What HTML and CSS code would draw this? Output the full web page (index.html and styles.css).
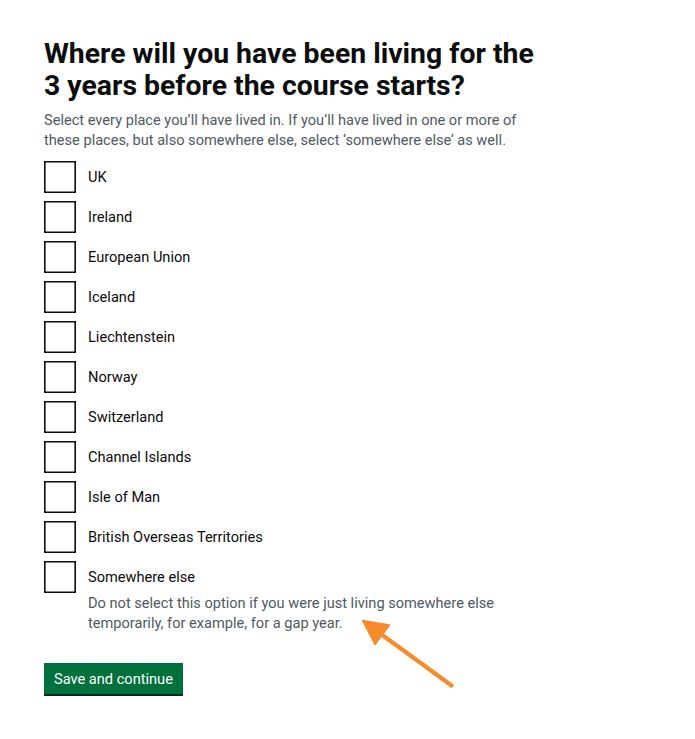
FILE: index.html
```html
<!DOCTYPE html>
<html lang="en">
<head>
<meta charset="utf-8">
<title>Where will you have been living</title>
<link rel="stylesheet" href="styles.css">
</head>
<body>
<main class="page">
  <form class="form">
    <fieldset class="fieldset">
      <legend class="legend">
        <h1 class="heading">Where will you have been living for the 3 years before the course starts?</h1>
      </legend>
      <p class="hint">Select every place you’ll have lived in. If you’ll have lived in one or more of these places, but also somewhere else, select ‘somewhere else’ as well.</p>
      <div class="checkboxes">
        <div class="item"><input class="box" type="checkbox" id="c1"><label class="label" for="c1">UK</label></div>
        <div class="item"><input class="box" type="checkbox" id="c2"><label class="label" for="c2">Ireland</label></div>
        <div class="item"><input class="box" type="checkbox" id="c3"><label class="label" for="c3">European Union</label></div>
        <div class="item"><input class="box" type="checkbox" id="c4"><label class="label" for="c4">Iceland</label></div>
        <div class="item"><input class="box" type="checkbox" id="c5"><label class="label" for="c5">Liechtenstein</label></div>
        <div class="item"><input class="box" type="checkbox" id="c6"><label class="label" for="c6">Norway</label></div>
        <div class="item"><input class="box" type="checkbox" id="c7"><label class="label" for="c7">Switzerland</label></div>
        <div class="item"><input class="box" type="checkbox" id="c8"><label class="label" for="c8">Channel Islands</label></div>
        <div class="item"><input class="box" type="checkbox" id="c9"><label class="label" for="c9">Isle of Man</label></div>
        <div class="item"><input class="box" type="checkbox" id="c10"><label class="label" for="c10">British Overseas Territories</label></div>
        <div class="item"><input class="box" type="checkbox" id="c11"><label class="label" for="c11">Somewhere else</label>
          <div class="item-hint">Do not select this option if you were just living somewhere else temporarily, for example, for a gap year.</div>
        </div>
      </div>
    </fieldset>
    <button class="button" type="button">Save and continue</button>
  </form>
  <svg class="arrow" width="695" height="739" viewBox="0 0 695 739" aria-hidden="true">
    <line x1="451.5" y1="685.5" x2="374" y2="629" stroke="#f68b2c" stroke-width="4.2" stroke-linecap="round"/>
    <polygon points="362.5,620.5 389.5,625 375,644.5" fill="#f68b2c" stroke="#f68b2c" stroke-width="1.5" stroke-linejoin="round"/>
  </svg>
</main>
</body>
</html>
```
FILE: styles.css
```css
html, body {
  margin: 0;
  padding: 0;
  background: #ffffff;
}

body {
  font-family: Roboto, "Liberation Sans", Arial, sans-serif;
  color: #0b0c0c;
}

.page {
  position: relative;
  width: 695px;
  min-height: 739px;
  padding: 38px 0 0 44px;
  box-sizing: border-box;
}

.form {
  width: 505px;
}

.fieldset {
  margin: 0;
  padding: 0;
  border: 0;
  min-width: 0;
}

.legend {
  padding: 0;
  display: block;
  width: 100%;
}

.heading {
  margin: 0 0 8px;
  font-size: 28.4px;
  line-height: 32px;
  font-weight: 700;
  color: #0b0c0c;
}

.hint {
  margin: 0 0 11px;
  font-size: 14.6px;
  line-height: 20px;
  color: #505a5f;
}

.checkboxes {
  display: flex;
  flex-direction: column;
  gap: 8px;
}

.item {
  display: grid;
  grid-template-columns: 32px 1fr;
  align-items: start;
}

.box {
  appearance: none;
  -webkit-appearance: none;
  margin: 0;
  width: 32px;
  height: 32px;
  box-sizing: border-box;
  border: 1px solid #0b0c0c;
  box-shadow: inset 0 0 0 0.6px #0b0c0c;
  background: #ffffff;
  grid-column: 1;
  grid-row: 1;
}

.label {
  grid-column: 2;
  grid-row: 1;
  padding: 6.4px 12px 4px;
  font-size: 14.6px;
  line-height: 20px;
  color: #0b0c0c;
}

.item-hint {
  grid-column: 2;
  grid-row: 2;
  padding: 0 12px;
  font-size: 14.6px;
  line-height: 20px;
  color: #505a5f;
}

.button {
  margin: 30px 0 0;
  display: inline-block;
  padding: 6px 9px 5px;
  border: 1px solid transparent;
  border-radius: 0;
  background: #00703c;
  box-shadow: 0 2px 0 #002d18;
  color: #ffffff;
  font-family: Roboto, "Liberation Sans", Arial, sans-serif;
  font-size: 14.6px;
  line-height: 18px;
  font-weight: 400;
  cursor: pointer;
}

.arrow {
  position: absolute;
  left: 0;
  top: 0;
  pointer-events: none;
}
```
